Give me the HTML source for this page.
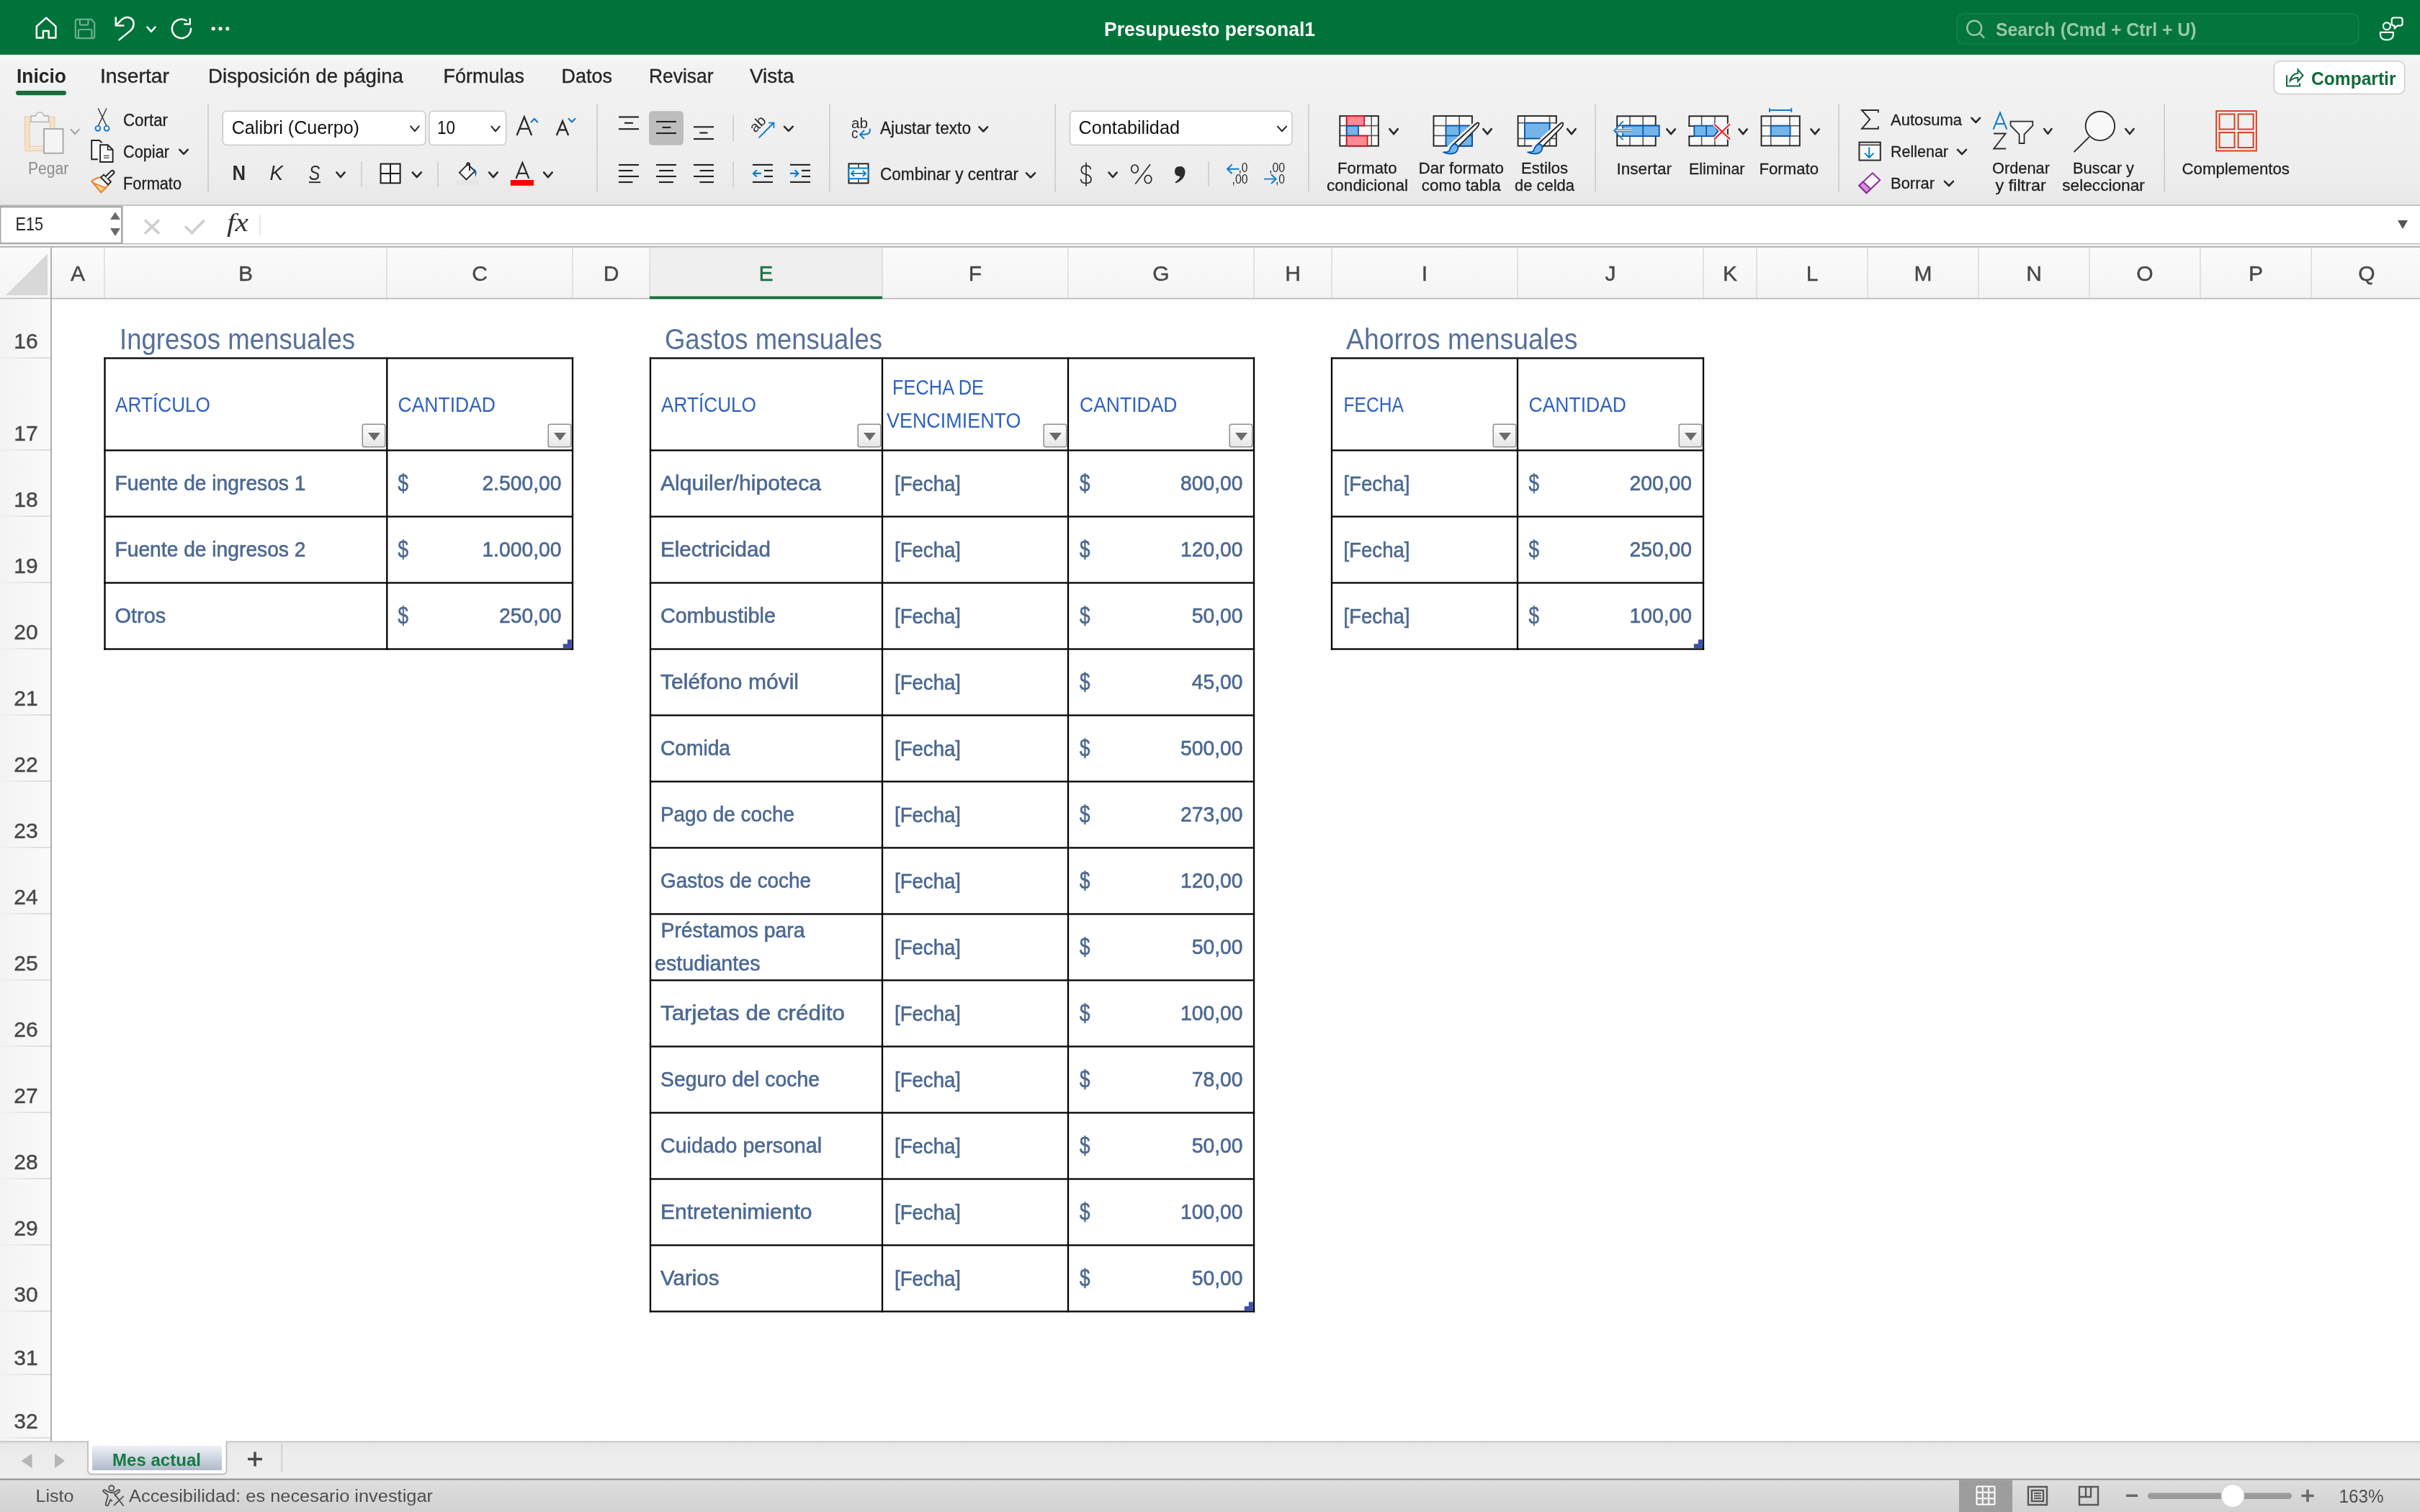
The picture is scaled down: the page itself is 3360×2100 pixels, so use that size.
<!DOCTYPE html><html><head><meta charset="utf-8"><title>Presupuesto personal1</title>
<style>html,body{margin:0;padding:0;width:3360px;height:2100px;overflow:hidden;background:#fff;font-family:"Liberation Sans",sans-serif;} svg{display:block;position:absolute;left:0;top:0;will-change:transform;} text{white-space:pre;}</style></head><body>
<svg width="3360" height="2100" viewBox="0 0 3360 2100">
<defs>
<linearGradient id="ribbonG" x1="0" y1="0" x2="0" y2="1"><stop offset="0" stop-color="#f8f8f8"/><stop offset="0.05" stop-color="#f3f3f3"/><stop offset="0.8" stop-color="#ededed"/><stop offset="1" stop-color="#e8e8e8"/></linearGradient>
<linearGradient id="colhG" x1="0" y1="0" x2="0" y2="1"><stop offset="0" stop-color="#fbfbfb"/><stop offset="1" stop-color="#f4f4f4"/></linearGradient>
<linearGradient id="rowhG" x1="0" y1="0" x2="1" y2="0"><stop offset="0" stop-color="#f3f3f3"/><stop offset="1" stop-color="#fafafa"/></linearGradient>
<linearGradient id="btnG" x1="0" y1="0" x2="0" y2="1"><stop offset="0" stop-color="#fefefe"/><stop offset="1" stop-color="#e6e6e6"/></linearGradient>
<linearGradient id="tabG" x1="0" y1="0" x2="0" y2="1"><stop offset="0" stop-color="#eef1f6"/><stop offset="1" stop-color="#b0bacb"/></linearGradient>
<linearGradient id="rowlineG" x1="0" y1="0" x2="1" y2="0"><stop offset="0" stop-color="#f2f2f2"/><stop offset="0.5" stop-color="#e2e2e2"/><stop offset="1" stop-color="#d8d8d8"/></linearGradient>
<linearGradient id="statG" x1="0" y1="0" x2="0" y2="1"><stop offset="0" stop-color="#dedede"/><stop offset="1" stop-color="#d2d2d2"/></linearGradient>
<linearGradient id="tabbarG" x1="0" y1="0" x2="0" y2="1"><stop offset="0" stop-color="#e6e6e6"/><stop offset="0.25" stop-color="#ececec"/><stop offset="1" stop-color="#ededed"/></linearGradient>
</defs>
<rect x="0" y="0" width="3360" height="76" fill="#00733a" />
<rect x="0" y="76" width="3360" height="209" fill="url(#ribbonG)" />
<rect x="0" y="76" width="3360" height="1.2" fill="#fdfdfd" />
<rect x="0" y="284.2" width="3360" height="1.9" fill="#c2c2c2" />
<rect x="0" y="286.5" width="3360" height="52" fill="#ffffff" />
<rect x="0" y="338" width="3360" height="1.5" fill="#b4b4b4" />
<rect x="0" y="339.5" width="3360" height="2.5" fill="#f4f4f4" />
<rect x="0" y="342" width="3360" height="1.8" fill="#a9a9a9" />
<rect x="0" y="343.8" width="3360" height="71" fill="url(#colhG)" />
<rect x="902" y="343.8" width="323" height="71" fill="#efefef" />
<rect x="0" y="413.8" width="3360" height="1.7" fill="#b9b9b9" />
<rect x="0" y="415.5" width="71" height="1587" fill="url(#rowhG)" />
<rect x="70" y="343.8" width="2" height="1660" fill="#b1b1b1" />
<rect x="0" y="2002" width="3360" height="53" fill="url(#tabbarG)" />
<rect x="0" y="2001.5" width="3360" height="1.8" fill="#c3c3c3" />
<rect x="0" y="2054" width="3360" height="46" fill="url(#statG)" />
<rect x="0" y="2053.6" width="3360" height="2" fill="#8f8f8f" />
<text x="108.0" y="390" font-size="30" fill="#474747" text-anchor="middle" font-weight="normal" font-family='"Liberation Sans", sans-serif' stroke="#474747" stroke-width="0.4" >A</text>
<rect x="144.25" y="344" width="1.5" height="70" fill="#dadada" />
<text x="341.0" y="390" font-size="30" fill="#474747" text-anchor="middle" font-weight="normal" font-family='"Liberation Sans", sans-serif' stroke="#474747" stroke-width="0.4" >B</text>
<rect x="536.25" y="344" width="1.5" height="70" fill="#dadada" />
<text x="666.0" y="390" font-size="30" fill="#474747" text-anchor="middle" font-weight="normal" font-family='"Liberation Sans", sans-serif' stroke="#474747" stroke-width="0.4" >C</text>
<rect x="794.25" y="344" width="1.5" height="70" fill="#dadada" />
<text x="848.5" y="390" font-size="30" fill="#474747" text-anchor="middle" font-weight="normal" font-family='"Liberation Sans", sans-serif' stroke="#474747" stroke-width="0.4" >D</text>
<rect x="901.25" y="344" width="1.5" height="70" fill="#dadada" />
<text x="1063.5" y="390" font-size="30" fill="#1b7240" text-anchor="middle" font-weight="normal" font-family='"Liberation Sans", sans-serif' stroke="#1b7240" stroke-width="0.4" >E</text>
<rect x="1224.25" y="344" width="1.5" height="70" fill="#dadada" />
<text x="1354.0" y="390" font-size="30" fill="#474747" text-anchor="middle" font-weight="normal" font-family='"Liberation Sans", sans-serif' stroke="#474747" stroke-width="0.4" >F</text>
<rect x="1482.25" y="344" width="1.5" height="70" fill="#dadada" />
<text x="1612.0" y="390" font-size="30" fill="#474747" text-anchor="middle" font-weight="normal" font-family='"Liberation Sans", sans-serif' stroke="#474747" stroke-width="0.4" >G</text>
<rect x="1740.25" y="344" width="1.5" height="70" fill="#dadada" />
<text x="1795.0" y="390" font-size="30" fill="#474747" text-anchor="middle" font-weight="normal" font-family='"Liberation Sans", sans-serif' stroke="#474747" stroke-width="0.4" >H</text>
<rect x="1848.25" y="344" width="1.5" height="70" fill="#dadada" />
<text x="1978.0" y="390" font-size="30" fill="#474747" text-anchor="middle" font-weight="normal" font-family='"Liberation Sans", sans-serif' stroke="#474747" stroke-width="0.4" >I</text>
<rect x="2106.25" y="344" width="1.5" height="70" fill="#dadada" />
<text x="2236.0" y="390" font-size="30" fill="#474747" text-anchor="middle" font-weight="normal" font-family='"Liberation Sans", sans-serif' stroke="#474747" stroke-width="0.4" >J</text>
<rect x="2364.25" y="344" width="1.5" height="70" fill="#dadada" />
<text x="2402.0" y="390" font-size="30" fill="#474747" text-anchor="middle" font-weight="normal" font-family='"Liberation Sans", sans-serif' stroke="#474747" stroke-width="0.4" >K</text>
<rect x="2438.25" y="344" width="1.5" height="70" fill="#dadada" />
<text x="2516.0" y="390" font-size="30" fill="#474747" text-anchor="middle" font-weight="normal" font-family='"Liberation Sans", sans-serif' stroke="#474747" stroke-width="0.4" >L</text>
<rect x="2592.25" y="344" width="1.5" height="70" fill="#dadada" />
<text x="2670.0" y="390" font-size="30" fill="#474747" text-anchor="middle" font-weight="normal" font-family='"Liberation Sans", sans-serif' stroke="#474747" stroke-width="0.4" >M</text>
<rect x="2746.25" y="344" width="1.5" height="70" fill="#dadada" />
<text x="2824.0" y="390" font-size="30" fill="#474747" text-anchor="middle" font-weight="normal" font-family='"Liberation Sans", sans-serif' stroke="#474747" stroke-width="0.4" >N</text>
<rect x="2900.25" y="344" width="1.5" height="70" fill="#dadada" />
<text x="2978.0" y="390" font-size="30" fill="#474747" text-anchor="middle" font-weight="normal" font-family='"Liberation Sans", sans-serif' stroke="#474747" stroke-width="0.4" >O</text>
<rect x="3054.25" y="344" width="1.5" height="70" fill="#dadada" />
<text x="3132.0" y="390" font-size="30" fill="#474747" text-anchor="middle" font-weight="normal" font-family='"Liberation Sans", sans-serif' stroke="#474747" stroke-width="0.4" >P</text>
<rect x="3208.25" y="344" width="1.5" height="70" fill="#dadada" />
<text x="3286.0" y="390" font-size="30" fill="#474747" text-anchor="middle" font-weight="normal" font-family='"Liberation Sans", sans-serif' stroke="#474747" stroke-width="0.4" >Q</text>
<rect x="902" y="411.5" width="323" height="3.8" fill="#1b6e3d" />
<polygon points="66,352.5 66,410 8,410" fill="#d8d8d8"/>
<rect x="0" y="496.1" width="70" height="1.8" fill="url(#rowlineG)" />
<text x="36" y="484" font-size="30" fill="#474747" text-anchor="middle" font-weight="normal" font-family='"Liberation Sans", sans-serif' stroke="#474747" stroke-width="0.4" >16</text>
<rect x="0" y="624.1" width="70" height="1.8" fill="url(#rowlineG)" />
<text x="36" y="612" font-size="30" fill="#474747" text-anchor="middle" font-weight="normal" font-family='"Liberation Sans", sans-serif' stroke="#474747" stroke-width="0.4" >17</text>
<rect x="0" y="716.1" width="70" height="1.8" fill="url(#rowlineG)" />
<text x="36" y="704" font-size="30" fill="#474747" text-anchor="middle" font-weight="normal" font-family='"Liberation Sans", sans-serif' stroke="#474747" stroke-width="0.4" >18</text>
<rect x="0" y="808.1" width="70" height="1.8" fill="url(#rowlineG)" />
<text x="36" y="796" font-size="30" fill="#474747" text-anchor="middle" font-weight="normal" font-family='"Liberation Sans", sans-serif' stroke="#474747" stroke-width="0.4" >19</text>
<rect x="0" y="900.1" width="70" height="1.8" fill="url(#rowlineG)" />
<text x="36" y="888" font-size="30" fill="#474747" text-anchor="middle" font-weight="normal" font-family='"Liberation Sans", sans-serif' stroke="#474747" stroke-width="0.4" >20</text>
<rect x="0" y="992.1" width="70" height="1.8" fill="url(#rowlineG)" />
<text x="36" y="980" font-size="30" fill="#474747" text-anchor="middle" font-weight="normal" font-family='"Liberation Sans", sans-serif' stroke="#474747" stroke-width="0.4" >21</text>
<rect x="0" y="1084.1" width="70" height="1.8" fill="url(#rowlineG)" />
<text x="36" y="1072" font-size="30" fill="#474747" text-anchor="middle" font-weight="normal" font-family='"Liberation Sans", sans-serif' stroke="#474747" stroke-width="0.4" >22</text>
<rect x="0" y="1176.1" width="70" height="1.8" fill="url(#rowlineG)" />
<text x="36" y="1164" font-size="30" fill="#474747" text-anchor="middle" font-weight="normal" font-family='"Liberation Sans", sans-serif' stroke="#474747" stroke-width="0.4" >23</text>
<rect x="0" y="1268.1" width="70" height="1.8" fill="url(#rowlineG)" />
<text x="36" y="1256" font-size="30" fill="#474747" text-anchor="middle" font-weight="normal" font-family='"Liberation Sans", sans-serif' stroke="#474747" stroke-width="0.4" >24</text>
<rect x="0" y="1360.1" width="70" height="1.8" fill="url(#rowlineG)" />
<text x="36" y="1348" font-size="30" fill="#474747" text-anchor="middle" font-weight="normal" font-family='"Liberation Sans", sans-serif' stroke="#474747" stroke-width="0.4" >25</text>
<rect x="0" y="1452.1" width="70" height="1.8" fill="url(#rowlineG)" />
<text x="36" y="1440" font-size="30" fill="#474747" text-anchor="middle" font-weight="normal" font-family='"Liberation Sans", sans-serif' stroke="#474747" stroke-width="0.4" >26</text>
<rect x="0" y="1544.1" width="70" height="1.8" fill="url(#rowlineG)" />
<text x="36" y="1532" font-size="30" fill="#474747" text-anchor="middle" font-weight="normal" font-family='"Liberation Sans", sans-serif' stroke="#474747" stroke-width="0.4" >27</text>
<rect x="0" y="1636.1" width="70" height="1.8" fill="url(#rowlineG)" />
<text x="36" y="1624" font-size="30" fill="#474747" text-anchor="middle" font-weight="normal" font-family='"Liberation Sans", sans-serif' stroke="#474747" stroke-width="0.4" >28</text>
<rect x="0" y="1728.1" width="70" height="1.8" fill="url(#rowlineG)" />
<text x="36" y="1716" font-size="30" fill="#474747" text-anchor="middle" font-weight="normal" font-family='"Liberation Sans", sans-serif' stroke="#474747" stroke-width="0.4" >29</text>
<rect x="0" y="1820.1" width="70" height="1.8" fill="url(#rowlineG)" />
<text x="36" y="1808" font-size="30" fill="#474747" text-anchor="middle" font-weight="normal" font-family='"Liberation Sans", sans-serif' stroke="#474747" stroke-width="0.4" >30</text>
<rect x="0" y="1908.1" width="70" height="1.8" fill="url(#rowlineG)" />
<text x="36" y="1896" font-size="30" fill="#474747" text-anchor="middle" font-weight="normal" font-family='"Liberation Sans", sans-serif' stroke="#474747" stroke-width="0.4" >31</text>
<rect x="0" y="1996.1" width="70" height="1.8" fill="url(#rowlineG)" />
<text x="36" y="1984" font-size="30" fill="#474747" text-anchor="middle" font-weight="normal" font-family='"Liberation Sans", sans-serif' stroke="#474747" stroke-width="0.4" >32</text>
<text x="166" y="484.5" font-size="41" fill="#56709a" text-anchor="start" font-weight="normal" font-family='"Liberation Sans", sans-serif' textLength="327" lengthAdjust="spacingAndGlyphs" >Ingresos mensuales</text>
<rect x="144.35" y="496.35" width="651.8" height="2.3" fill="#000" />
<rect x="144.35" y="624.35" width="651.8" height="2.3" fill="#000" />
<rect x="144.35" y="716.35" width="651.8" height="2.3" fill="#000" />
<rect x="144.35" y="808.35" width="651.8" height="2.3" fill="#000" />
<rect x="144.35" y="900.35" width="651.8" height="2.3" fill="#000" />
<rect x="144.35" y="496.35" width="2.3" height="406.3" fill="#000" />
<rect x="536.15" y="496.35" width="2.3" height="406.3" fill="#000" />
<rect x="793.85" y="496.35" width="2.3" height="406.3" fill="#000" />
<text x="160" y="572" font-size="29" fill="#2f62bf" text-anchor="start" font-weight="normal" font-family='"Liberation Sans", sans-serif' textLength="132" lengthAdjust="spacingAndGlyphs" >ARTÍCULO</text>
<text x="552.5" y="572" font-size="29" fill="#2f62bf" text-anchor="start" font-weight="normal" font-family='"Liberation Sans", sans-serif' textLength="135.5" lengthAdjust="spacingAndGlyphs" >CANTIDAD</text>
<rect x="503.25" y="589.25" width="31.5" height="31.5" rx="2.5" fill="url(#btnG)" stroke="#8e8e8e" stroke-width="1.5"/>
<polygon points="511.0,601.0 528.0,601.0 519.5,612.0" fill="#6b6b6b"/>
<rect x="761.25" y="589.25" width="31.5" height="31.5" rx="2.5" fill="url(#btnG)" stroke="#8e8e8e" stroke-width="1.5"/>
<polygon points="769.0,601.0 786.0,601.0 777.5,612.0" fill="#6b6b6b"/>
<text x="159.5" y="681" font-size="30" fill="#4b6891" text-anchor="start" font-weight="normal" font-family='"Liberation Sans", sans-serif' textLength="265" lengthAdjust="spacingAndGlyphs" stroke="#4b6891" stroke-width="0.6" >Fuente de ingresos 1</text>
<text x="552.5" y="681.5" font-size="33" fill="#4b6891" text-anchor="start" font-weight="normal" font-family='"Liberation Sans", sans-serif' textLength="14.5" lengthAdjust="spacingAndGlyphs" stroke="#4b6891" stroke-width="0.6" >$</text>
<text x="779.5" y="681" font-size="30" fill="#4b6891" text-anchor="end" font-weight="normal" font-family='"Liberation Sans", sans-serif' textLength="110.1" lengthAdjust="spacingAndGlyphs" stroke="#4b6891" stroke-width="0.6" >2.500,00</text>
<text x="159.5" y="773" font-size="30" fill="#4b6891" text-anchor="start" font-weight="normal" font-family='"Liberation Sans", sans-serif' textLength="265" lengthAdjust="spacingAndGlyphs" stroke="#4b6891" stroke-width="0.6" >Fuente de ingresos 2</text>
<text x="552.5" y="773.5" font-size="33" fill="#4b6891" text-anchor="start" font-weight="normal" font-family='"Liberation Sans", sans-serif' textLength="14.5" lengthAdjust="spacingAndGlyphs" stroke="#4b6891" stroke-width="0.6" >$</text>
<text x="779.5" y="773" font-size="30" fill="#4b6891" text-anchor="end" font-weight="normal" font-family='"Liberation Sans", sans-serif' textLength="110.1" lengthAdjust="spacingAndGlyphs" stroke="#4b6891" stroke-width="0.6" >1.000,00</text>
<text x="159.5" y="865" font-size="30" fill="#4b6891" text-anchor="start" font-weight="normal" font-family='"Liberation Sans", sans-serif' textLength="70.8" lengthAdjust="spacingAndGlyphs" stroke="#4b6891" stroke-width="0.6" >Otros</text>
<text x="552.5" y="865.5" font-size="33" fill="#4b6891" text-anchor="start" font-weight="normal" font-family='"Liberation Sans", sans-serif' textLength="14.5" lengthAdjust="spacingAndGlyphs" stroke="#4b6891" stroke-width="0.6" >$</text>
<text x="779.5" y="865" font-size="30" fill="#4b6891" text-anchor="end" font-weight="normal" font-family='"Liberation Sans", sans-serif' textLength="86.5" lengthAdjust="spacingAndGlyphs" stroke="#4b6891" stroke-width="0.6" >250,00</text>
<polygon points="781.8,900.2 781.8,894.2 787.8,894.2 787.8,888.2 793.8,888.2 793.8,900.2" fill="#3d4fa9"/>
<text x="923" y="484.5" font-size="41" fill="#56709a" text-anchor="start" font-weight="normal" font-family='"Liberation Sans", sans-serif' textLength="302" lengthAdjust="spacingAndGlyphs" >Gastos mensuales</text>
<rect x="901.85" y="496.35" width="840.3" height="2.3" fill="#000" />
<rect x="901.85" y="624.35" width="840.3" height="2.3" fill="#000" />
<rect x="901.85" y="716.35" width="840.3" height="2.3" fill="#000" />
<rect x="901.85" y="808.35" width="840.3" height="2.3" fill="#000" />
<rect x="901.85" y="900.35" width="840.3" height="2.3" fill="#000" />
<rect x="901.85" y="992.35" width="840.3" height="2.3" fill="#000" />
<rect x="901.85" y="1084.35" width="840.3" height="2.3" fill="#000" />
<rect x="901.85" y="1176.35" width="840.3" height="2.3" fill="#000" />
<rect x="901.85" y="1268.35" width="840.3" height="2.3" fill="#000" />
<rect x="901.85" y="1360.35" width="840.3" height="2.3" fill="#000" />
<rect x="901.85" y="1452.35" width="840.3" height="2.3" fill="#000" />
<rect x="901.85" y="1544.35" width="840.3" height="2.3" fill="#000" />
<rect x="901.85" y="1636.35" width="840.3" height="2.3" fill="#000" />
<rect x="901.85" y="1728.35" width="840.3" height="2.3" fill="#000" />
<rect x="901.85" y="1820.35" width="840.3" height="2.3" fill="#000" />
<rect x="901.85" y="496.35" width="2.3" height="1326.3" fill="#000" />
<rect x="1223.85" y="496.35" width="2.3" height="1326.3" fill="#000" />
<rect x="1481.85" y="496.35" width="2.3" height="1326.3" fill="#000" />
<rect x="1739.85" y="496.35" width="2.3" height="1326.3" fill="#000" />
<text x="918" y="572" font-size="29" fill="#2f62bf" text-anchor="start" font-weight="normal" font-family='"Liberation Sans", sans-serif' textLength="132" lengthAdjust="spacingAndGlyphs" >ARTÍCULO</text>
<text x="1239" y="547.5" font-size="29" fill="#2f62bf" text-anchor="start" font-weight="normal" font-family='"Liberation Sans", sans-serif' textLength="127" lengthAdjust="spacingAndGlyphs" >FECHA DE</text>
<text x="1231" y="594" font-size="29" fill="#2f62bf" text-anchor="start" font-weight="normal" font-family='"Liberation Sans", sans-serif' textLength="186.5" lengthAdjust="spacingAndGlyphs" >VENCIMIENTO</text>
<text x="1499" y="572" font-size="29" fill="#2f62bf" text-anchor="start" font-weight="normal" font-family='"Liberation Sans", sans-serif' textLength="135.5" lengthAdjust="spacingAndGlyphs" >CANTIDAD</text>
<rect x="1191.25" y="589.25" width="31.5" height="31.5" rx="2.5" fill="url(#btnG)" stroke="#8e8e8e" stroke-width="1.5"/>
<polygon points="1199.0,601.0 1216.0,601.0 1207.5,612.0" fill="#6b6b6b"/>
<rect x="1449.25" y="589.25" width="31.5" height="31.5" rx="2.5" fill="url(#btnG)" stroke="#8e8e8e" stroke-width="1.5"/>
<polygon points="1457.0,601.0 1474.0,601.0 1465.5,612.0" fill="#6b6b6b"/>
<rect x="1707.25" y="589.25" width="31.5" height="31.5" rx="2.5" fill="url(#btnG)" stroke="#8e8e8e" stroke-width="1.5"/>
<polygon points="1715.0,601.0 1732.0,601.0 1723.5,612.0" fill="#6b6b6b"/>
<text x="917" y="681" font-size="30" fill="#4b6891" text-anchor="start" font-weight="normal" font-family='"Liberation Sans", sans-serif' textLength="223" lengthAdjust="spacingAndGlyphs" stroke="#4b6891" stroke-width="0.6" >Alquiler/hipoteca</text>
<text x="1242" y="682" font-size="30" fill="#4b6891" text-anchor="start" font-weight="normal" font-family='"Liberation Sans", sans-serif' textLength="92" lengthAdjust="spacingAndGlyphs" stroke="#4b6891" stroke-width="0.6" >[Fecha]</text>
<text x="1499" y="681.5" font-size="33" fill="#4b6891" text-anchor="start" font-weight="normal" font-family='"Liberation Sans", sans-serif' textLength="14.5" lengthAdjust="spacingAndGlyphs" stroke="#4b6891" stroke-width="0.6" >$</text>
<text x="1725.5" y="681" font-size="30" fill="#4b6891" text-anchor="end" font-weight="normal" font-family='"Liberation Sans", sans-serif' textLength="86.5" lengthAdjust="spacingAndGlyphs" stroke="#4b6891" stroke-width="0.6" >800,00</text>
<text x="917" y="773" font-size="30" fill="#4b6891" text-anchor="start" font-weight="normal" font-family='"Liberation Sans", sans-serif' textLength="153" lengthAdjust="spacingAndGlyphs" stroke="#4b6891" stroke-width="0.6" >Electricidad</text>
<text x="1242" y="774" font-size="30" fill="#4b6891" text-anchor="start" font-weight="normal" font-family='"Liberation Sans", sans-serif' textLength="92" lengthAdjust="spacingAndGlyphs" stroke="#4b6891" stroke-width="0.6" >[Fecha]</text>
<text x="1499" y="773.5" font-size="33" fill="#4b6891" text-anchor="start" font-weight="normal" font-family='"Liberation Sans", sans-serif' textLength="14.5" lengthAdjust="spacingAndGlyphs" stroke="#4b6891" stroke-width="0.6" >$</text>
<text x="1725.5" y="773" font-size="30" fill="#4b6891" text-anchor="end" font-weight="normal" font-family='"Liberation Sans", sans-serif' textLength="86.5" lengthAdjust="spacingAndGlyphs" stroke="#4b6891" stroke-width="0.6" >120,00</text>
<text x="917" y="865" font-size="30" fill="#4b6891" text-anchor="start" font-weight="normal" font-family='"Liberation Sans", sans-serif' textLength="160" lengthAdjust="spacingAndGlyphs" stroke="#4b6891" stroke-width="0.6" >Combustible</text>
<text x="1242" y="866" font-size="30" fill="#4b6891" text-anchor="start" font-weight="normal" font-family='"Liberation Sans", sans-serif' textLength="92" lengthAdjust="spacingAndGlyphs" stroke="#4b6891" stroke-width="0.6" >[Fecha]</text>
<text x="1499" y="865.5" font-size="33" fill="#4b6891" text-anchor="start" font-weight="normal" font-family='"Liberation Sans", sans-serif' textLength="14.5" lengthAdjust="spacingAndGlyphs" stroke="#4b6891" stroke-width="0.6" >$</text>
<text x="1725.5" y="865" font-size="30" fill="#4b6891" text-anchor="end" font-weight="normal" font-family='"Liberation Sans", sans-serif' textLength="70.8" lengthAdjust="spacingAndGlyphs" stroke="#4b6891" stroke-width="0.6" >50,00</text>
<text x="917" y="957" font-size="30" fill="#4b6891" text-anchor="start" font-weight="normal" font-family='"Liberation Sans", sans-serif' textLength="192" lengthAdjust="spacingAndGlyphs" stroke="#4b6891" stroke-width="0.6" >Teléfono móvil</text>
<text x="1242" y="958" font-size="30" fill="#4b6891" text-anchor="start" font-weight="normal" font-family='"Liberation Sans", sans-serif' textLength="92" lengthAdjust="spacingAndGlyphs" stroke="#4b6891" stroke-width="0.6" >[Fecha]</text>
<text x="1499" y="957.5" font-size="33" fill="#4b6891" text-anchor="start" font-weight="normal" font-family='"Liberation Sans", sans-serif' textLength="14.5" lengthAdjust="spacingAndGlyphs" stroke="#4b6891" stroke-width="0.6" >$</text>
<text x="1725.5" y="957" font-size="30" fill="#4b6891" text-anchor="end" font-weight="normal" font-family='"Liberation Sans", sans-serif' textLength="70.8" lengthAdjust="spacingAndGlyphs" stroke="#4b6891" stroke-width="0.6" >45,00</text>
<text x="917" y="1049" font-size="30" fill="#4b6891" text-anchor="start" font-weight="normal" font-family='"Liberation Sans", sans-serif' textLength="97" lengthAdjust="spacingAndGlyphs" stroke="#4b6891" stroke-width="0.6" >Comida</text>
<text x="1242" y="1050" font-size="30" fill="#4b6891" text-anchor="start" font-weight="normal" font-family='"Liberation Sans", sans-serif' textLength="92" lengthAdjust="spacingAndGlyphs" stroke="#4b6891" stroke-width="0.6" >[Fecha]</text>
<text x="1499" y="1049.5" font-size="33" fill="#4b6891" text-anchor="start" font-weight="normal" font-family='"Liberation Sans", sans-serif' textLength="14.5" lengthAdjust="spacingAndGlyphs" stroke="#4b6891" stroke-width="0.6" >$</text>
<text x="1725.5" y="1049" font-size="30" fill="#4b6891" text-anchor="end" font-weight="normal" font-family='"Liberation Sans", sans-serif' textLength="86.5" lengthAdjust="spacingAndGlyphs" stroke="#4b6891" stroke-width="0.6" >500,00</text>
<text x="917" y="1141" font-size="30" fill="#4b6891" text-anchor="start" font-weight="normal" font-family='"Liberation Sans", sans-serif' textLength="186" lengthAdjust="spacingAndGlyphs" stroke="#4b6891" stroke-width="0.6" >Pago de coche</text>
<text x="1242" y="1142" font-size="30" fill="#4b6891" text-anchor="start" font-weight="normal" font-family='"Liberation Sans", sans-serif' textLength="92" lengthAdjust="spacingAndGlyphs" stroke="#4b6891" stroke-width="0.6" >[Fecha]</text>
<text x="1499" y="1141.5" font-size="33" fill="#4b6891" text-anchor="start" font-weight="normal" font-family='"Liberation Sans", sans-serif' textLength="14.5" lengthAdjust="spacingAndGlyphs" stroke="#4b6891" stroke-width="0.6" >$</text>
<text x="1725.5" y="1141" font-size="30" fill="#4b6891" text-anchor="end" font-weight="normal" font-family='"Liberation Sans", sans-serif' textLength="86.5" lengthAdjust="spacingAndGlyphs" stroke="#4b6891" stroke-width="0.6" >273,00</text>
<text x="917" y="1233" font-size="30" fill="#4b6891" text-anchor="start" font-weight="normal" font-family='"Liberation Sans", sans-serif' textLength="209" lengthAdjust="spacingAndGlyphs" stroke="#4b6891" stroke-width="0.6" >Gastos de coche</text>
<text x="1242" y="1234" font-size="30" fill="#4b6891" text-anchor="start" font-weight="normal" font-family='"Liberation Sans", sans-serif' textLength="92" lengthAdjust="spacingAndGlyphs" stroke="#4b6891" stroke-width="0.6" >[Fecha]</text>
<text x="1499" y="1233.5" font-size="33" fill="#4b6891" text-anchor="start" font-weight="normal" font-family='"Liberation Sans", sans-serif' textLength="14.5" lengthAdjust="spacingAndGlyphs" stroke="#4b6891" stroke-width="0.6" >$</text>
<text x="1725.5" y="1233" font-size="30" fill="#4b6891" text-anchor="end" font-weight="normal" font-family='"Liberation Sans", sans-serif' textLength="86.5" lengthAdjust="spacingAndGlyphs" stroke="#4b6891" stroke-width="0.6" >120,00</text>
<text x="917.5" y="1302" font-size="30" fill="#4b6891" text-anchor="start" font-weight="normal" font-family='"Liberation Sans", sans-serif' textLength="200" lengthAdjust="spacingAndGlyphs" stroke="#4b6891" stroke-width="0.6" >Préstamos para</text>
<text x="909" y="1347.5" font-size="30" fill="#4b6891" text-anchor="start" font-weight="normal" font-family='"Liberation Sans", sans-serif' textLength="146.5" lengthAdjust="spacingAndGlyphs" stroke="#4b6891" stroke-width="0.6" >estudiantes</text>
<text x="1242" y="1326" font-size="30" fill="#4b6891" text-anchor="start" font-weight="normal" font-family='"Liberation Sans", sans-serif' textLength="92" lengthAdjust="spacingAndGlyphs" stroke="#4b6891" stroke-width="0.6" >[Fecha]</text>
<text x="1499" y="1325.5" font-size="33" fill="#4b6891" text-anchor="start" font-weight="normal" font-family='"Liberation Sans", sans-serif' textLength="14.5" lengthAdjust="spacingAndGlyphs" stroke="#4b6891" stroke-width="0.6" >$</text>
<text x="1725.5" y="1325" font-size="30" fill="#4b6891" text-anchor="end" font-weight="normal" font-family='"Liberation Sans", sans-serif' textLength="70.8" lengthAdjust="spacingAndGlyphs" stroke="#4b6891" stroke-width="0.6" >50,00</text>
<text x="917" y="1417" font-size="30" fill="#4b6891" text-anchor="start" font-weight="normal" font-family='"Liberation Sans", sans-serif' textLength="256" lengthAdjust="spacingAndGlyphs" stroke="#4b6891" stroke-width="0.6" >Tarjetas de crédito</text>
<text x="1242" y="1418" font-size="30" fill="#4b6891" text-anchor="start" font-weight="normal" font-family='"Liberation Sans", sans-serif' textLength="92" lengthAdjust="spacingAndGlyphs" stroke="#4b6891" stroke-width="0.6" >[Fecha]</text>
<text x="1499" y="1417.5" font-size="33" fill="#4b6891" text-anchor="start" font-weight="normal" font-family='"Liberation Sans", sans-serif' textLength="14.5" lengthAdjust="spacingAndGlyphs" stroke="#4b6891" stroke-width="0.6" >$</text>
<text x="1725.5" y="1417" font-size="30" fill="#4b6891" text-anchor="end" font-weight="normal" font-family='"Liberation Sans", sans-serif' textLength="86.5" lengthAdjust="spacingAndGlyphs" stroke="#4b6891" stroke-width="0.6" >100,00</text>
<text x="917" y="1509" font-size="30" fill="#4b6891" text-anchor="start" font-weight="normal" font-family='"Liberation Sans", sans-serif' textLength="221" lengthAdjust="spacingAndGlyphs" stroke="#4b6891" stroke-width="0.6" >Seguro del coche</text>
<text x="1242" y="1510" font-size="30" fill="#4b6891" text-anchor="start" font-weight="normal" font-family='"Liberation Sans", sans-serif' textLength="92" lengthAdjust="spacingAndGlyphs" stroke="#4b6891" stroke-width="0.6" >[Fecha]</text>
<text x="1499" y="1509.5" font-size="33" fill="#4b6891" text-anchor="start" font-weight="normal" font-family='"Liberation Sans", sans-serif' textLength="14.5" lengthAdjust="spacingAndGlyphs" stroke="#4b6891" stroke-width="0.6" >$</text>
<text x="1725.5" y="1509" font-size="30" fill="#4b6891" text-anchor="end" font-weight="normal" font-family='"Liberation Sans", sans-serif' textLength="70.8" lengthAdjust="spacingAndGlyphs" stroke="#4b6891" stroke-width="0.6" >78,00</text>
<text x="917" y="1601" font-size="30" fill="#4b6891" text-anchor="start" font-weight="normal" font-family='"Liberation Sans", sans-serif' textLength="224" lengthAdjust="spacingAndGlyphs" stroke="#4b6891" stroke-width="0.6" >Cuidado personal</text>
<text x="1242" y="1602" font-size="30" fill="#4b6891" text-anchor="start" font-weight="normal" font-family='"Liberation Sans", sans-serif' textLength="92" lengthAdjust="spacingAndGlyphs" stroke="#4b6891" stroke-width="0.6" >[Fecha]</text>
<text x="1499" y="1601.5" font-size="33" fill="#4b6891" text-anchor="start" font-weight="normal" font-family='"Liberation Sans", sans-serif' textLength="14.5" lengthAdjust="spacingAndGlyphs" stroke="#4b6891" stroke-width="0.6" >$</text>
<text x="1725.5" y="1601" font-size="30" fill="#4b6891" text-anchor="end" font-weight="normal" font-family='"Liberation Sans", sans-serif' textLength="70.8" lengthAdjust="spacingAndGlyphs" stroke="#4b6891" stroke-width="0.6" >50,00</text>
<text x="917" y="1693" font-size="30" fill="#4b6891" text-anchor="start" font-weight="normal" font-family='"Liberation Sans", sans-serif' textLength="210.5" lengthAdjust="spacingAndGlyphs" stroke="#4b6891" stroke-width="0.6" >Entretenimiento</text>
<text x="1242" y="1694" font-size="30" fill="#4b6891" text-anchor="start" font-weight="normal" font-family='"Liberation Sans", sans-serif' textLength="92" lengthAdjust="spacingAndGlyphs" stroke="#4b6891" stroke-width="0.6" >[Fecha]</text>
<text x="1499" y="1693.5" font-size="33" fill="#4b6891" text-anchor="start" font-weight="normal" font-family='"Liberation Sans", sans-serif' textLength="14.5" lengthAdjust="spacingAndGlyphs" stroke="#4b6891" stroke-width="0.6" >$</text>
<text x="1725.5" y="1693" font-size="30" fill="#4b6891" text-anchor="end" font-weight="normal" font-family='"Liberation Sans", sans-serif' textLength="86.5" lengthAdjust="spacingAndGlyphs" stroke="#4b6891" stroke-width="0.6" >100,00</text>
<text x="917" y="1785" font-size="30" fill="#4b6891" text-anchor="start" font-weight="normal" font-family='"Liberation Sans", sans-serif' textLength="81.5" lengthAdjust="spacingAndGlyphs" stroke="#4b6891" stroke-width="0.6" >Varios</text>
<text x="1242" y="1786" font-size="30" fill="#4b6891" text-anchor="start" font-weight="normal" font-family='"Liberation Sans", sans-serif' textLength="92" lengthAdjust="spacingAndGlyphs" stroke="#4b6891" stroke-width="0.6" >[Fecha]</text>
<text x="1499" y="1785.5" font-size="33" fill="#4b6891" text-anchor="start" font-weight="normal" font-family='"Liberation Sans", sans-serif' textLength="14.5" lengthAdjust="spacingAndGlyphs" stroke="#4b6891" stroke-width="0.6" >$</text>
<text x="1725.5" y="1785" font-size="30" fill="#4b6891" text-anchor="end" font-weight="normal" font-family='"Liberation Sans", sans-serif' textLength="70.8" lengthAdjust="spacingAndGlyphs" stroke="#4b6891" stroke-width="0.6" >50,00</text>
<polygon points="1727.8,1820.2 1727.8,1814.2 1733.8,1814.2 1733.8,1808.2 1739.8,1808.2 1739.8,1820.2" fill="#3d4fa9"/>
<text x="1869" y="484.5" font-size="41" fill="#56709a" text-anchor="start" font-weight="normal" font-family='"Liberation Sans", sans-serif' textLength="321.5" lengthAdjust="spacingAndGlyphs" >Ahorros mensuales</text>
<rect x="1847.85" y="496.35" width="518.3" height="2.3" fill="#000" />
<rect x="1847.85" y="624.35" width="518.3" height="2.3" fill="#000" />
<rect x="1847.85" y="716.35" width="518.3" height="2.3" fill="#000" />
<rect x="1847.85" y="808.35" width="518.3" height="2.3" fill="#000" />
<rect x="1847.85" y="900.35" width="518.3" height="2.3" fill="#000" />
<rect x="1847.85" y="496.35" width="2.3" height="406.3" fill="#000" />
<rect x="2105.85" y="496.35" width="2.3" height="406.3" fill="#000" />
<rect x="2363.85" y="496.35" width="2.3" height="406.3" fill="#000" />
<text x="1865.5" y="572" font-size="29" fill="#2f62bf" text-anchor="start" font-weight="normal" font-family='"Liberation Sans", sans-serif' textLength="83.5" lengthAdjust="spacingAndGlyphs" >FECHA</text>
<text x="2122.5" y="572" font-size="29" fill="#2f62bf" text-anchor="start" font-weight="normal" font-family='"Liberation Sans", sans-serif' textLength="135.5" lengthAdjust="spacingAndGlyphs" >CANTIDAD</text>
<rect x="2073.25" y="589.25" width="31.5" height="31.5" rx="2.5" fill="url(#btnG)" stroke="#8e8e8e" stroke-width="1.5"/>
<polygon points="2081.0,601.0 2098.0,601.0 2089.5,612.0" fill="#6b6b6b"/>
<rect x="2331.25" y="589.25" width="31.5" height="31.5" rx="2.5" fill="url(#btnG)" stroke="#8e8e8e" stroke-width="1.5"/>
<polygon points="2339.0,601.0 2356.0,601.0 2347.5,612.0" fill="#6b6b6b"/>
<text x="1865.5" y="682" font-size="30" fill="#4b6891" text-anchor="start" font-weight="normal" font-family='"Liberation Sans", sans-serif' textLength="92" lengthAdjust="spacingAndGlyphs" stroke="#4b6891" stroke-width="0.6" >[Fecha]</text>
<text x="2122.5" y="681.5" font-size="33" fill="#4b6891" text-anchor="start" font-weight="normal" font-family='"Liberation Sans", sans-serif' textLength="14.5" lengthAdjust="spacingAndGlyphs" stroke="#4b6891" stroke-width="0.6" >$</text>
<text x="2349" y="681" font-size="30" fill="#4b6891" text-anchor="end" font-weight="normal" font-family='"Liberation Sans", sans-serif' textLength="86.5" lengthAdjust="spacingAndGlyphs" stroke="#4b6891" stroke-width="0.6" >200,00</text>
<text x="1865.5" y="774" font-size="30" fill="#4b6891" text-anchor="start" font-weight="normal" font-family='"Liberation Sans", sans-serif' textLength="92" lengthAdjust="spacingAndGlyphs" stroke="#4b6891" stroke-width="0.6" >[Fecha]</text>
<text x="2122.5" y="773.5" font-size="33" fill="#4b6891" text-anchor="start" font-weight="normal" font-family='"Liberation Sans", sans-serif' textLength="14.5" lengthAdjust="spacingAndGlyphs" stroke="#4b6891" stroke-width="0.6" >$</text>
<text x="2349" y="773" font-size="30" fill="#4b6891" text-anchor="end" font-weight="normal" font-family='"Liberation Sans", sans-serif' textLength="86.5" lengthAdjust="spacingAndGlyphs" stroke="#4b6891" stroke-width="0.6" >250,00</text>
<text x="1865.5" y="866" font-size="30" fill="#4b6891" text-anchor="start" font-weight="normal" font-family='"Liberation Sans", sans-serif' textLength="92" lengthAdjust="spacingAndGlyphs" stroke="#4b6891" stroke-width="0.6" >[Fecha]</text>
<text x="2122.5" y="865.5" font-size="33" fill="#4b6891" text-anchor="start" font-weight="normal" font-family='"Liberation Sans", sans-serif' textLength="14.5" lengthAdjust="spacingAndGlyphs" stroke="#4b6891" stroke-width="0.6" >$</text>
<text x="2349" y="865" font-size="30" fill="#4b6891" text-anchor="end" font-weight="normal" font-family='"Liberation Sans", sans-serif' textLength="86.5" lengthAdjust="spacingAndGlyphs" stroke="#4b6891" stroke-width="0.6" >100,00</text>
<polygon points="2351.8,900.2 2351.8,894.2 2357.8,894.2 2357.8,888.2 2363.8,888.2 2363.8,900.2" fill="#3d4fa9"/>
<rect x="0.75" y="287" width="168" height="50.5" fill="#fff" stroke="#a8a8a8" stroke-width="1.5"/>
<rect x="0" y="286.2" width="170" height="2.2" fill="#a5a5a5" />
<rect x="168.2" y="286.2" width="2.4" height="52" fill="#a9a9a9" />
<text x="21.5" y="320" font-size="26" fill="#262626" text-anchor="start" font-weight="normal" font-family='"Liberation Sans", sans-serif' textLength="38.5" lengthAdjust="spacingAndGlyphs" >E15</text>
<polygon points="153,305 167,305 160,294.5" fill="#6a6a6a"/>
<polygon points="153,317 167,317 160,328" fill="#6a6a6a"/>
<path d="M202,306.5 L220,323.5 M220,306.5 L202,323.5" stroke="#cdcdcd" stroke-width="3.6" stroke-linecap="round"/>
<path d="M258,315.5 L266.5,323.5 L282.5,307" stroke="#cdcdcd" stroke-width="3.6" stroke-linecap="round" stroke-linejoin="round" fill="none"/>
<text x="315" y="321" font-size="35" fill="#333" text-anchor="start" font-weight="normal" font-family='"Liberation Serif", serif' textLength="30" lengthAdjust="spacingAndGlyphs" font-style="italic">fx</text>
<rect x="360.5" y="298" width="1.5" height="30" fill="#e2e2e2" />
<polygon points="3329,306 3343,306 3336,318" fill="#555"/>
<polygon points="44.5,2019 44.5,2039 29.5,2029" fill="#b5b5b5"/>
<polygon points="76,2019 76,2039 90,2029" fill="#b5b5b5"/>
<path d="M122,2002 L122,2042 Q122,2047.5 127.5,2047.5 L309,2047.5 Q314.5,2047.5 314.5,2042 L314.5,2002 Z" fill="#ffffff" stroke="none"/>
<path d="M122,2001.5 L122,2042 Q122,2047.5 127.5,2047.5 L309,2047.5 Q314.5,2047.5 314.5,2042 L314.5,2001.5" fill="none" stroke="#bdbdbd" stroke-width="1.8"/>
<rect x="123" y="2000.5" width="190.5" height="3.5" fill="#ffffff" />
<rect x="128" y="2008" width="180" height="34" fill="url(#tabG)" />
<text x="156" y="2036" font-size="24.7" fill="#167a43" text-anchor="start" font-weight="bold" font-family='"Liberation Sans", sans-serif' textLength="123" lengthAdjust="spacingAndGlyphs" >Mes actual</text>
<path d="M354,2016.5 L354,2036.5 M344,2026.5 L364,2026.5" stroke="#4a4a4a" stroke-width="3.6"/>
<rect x="390.5" y="2005" width="1.5" height="39.5" fill="#cacaca" />
<text x="49.5" y="2086" font-size="23.5" fill="#4f4f4f" text-anchor="start" font-weight="normal" font-family='"Liberation Sans", sans-serif' textLength="53" lengthAdjust="spacingAndGlyphs" >Listo</text>
<g fill="none" stroke="#555" stroke-width="1.9" stroke-linecap="round" stroke-linejoin="round"><circle cx="154.8" cy="2066.8" r="3.6"/><path d="M143.2,2070.6 Q144,2068.6 146,2069.6 Q150.5,2073.2 155,2073.2 Q159.6,2073.2 163.8,2069.4 Q165.6,2068.4 166.4,2070.4 Q166.2,2072 161,2075.3 Q159.8,2076.3 160,2077.6"/><path d="M143.2,2070.6 Q143.4,2072.4 148.6,2075.4 Q150,2076.4 149.6,2078.6 L146.8,2088.6 Q146.4,2091.2 148.6,2091.2 Q150.2,2091.2 150.8,2089.2 L153.4,2082.6 L155.4,2084.6"/><path d="M158.6,2074.6 L171.2,2091 M171.2,2078.4 L158.4,2090.6"/></g>
<text x="179" y="2086" font-size="23.5" fill="#4f4f4f" text-anchor="start" font-weight="normal" font-family='"Liberation Sans", sans-serif' textLength="422" lengthAdjust="spacingAndGlyphs" >Accesibilidad: es necesario investigar</text>
<rect x="2720" y="2055.5" width="74" height="44.5" fill="#9d9d9d" />
<g fill="none" stroke="#fff" stroke-width="2"><rect x="2744.5" y="2064.5" width="25" height="25" rx="1"/><path d="M2752.8,2064.5 V2089.5 M2761.2,2064.5 V2089.5 M2744.5,2072.8 H2769.5 M2744.5,2081.2 H2769.5"/></g>
<g fill="none" stroke="#575757" stroke-width="2.4"><rect x="2816" y="2065" width="26" height="25"/><rect x="2821" y="2070" width="16" height="15"/></g>
<path d="M2824,2074 H2834 M2824,2077.5 H2834 M2824,2081 H2834" stroke="#575757" stroke-width="2"/>
<g fill="none" stroke="#575757" stroke-width="2.4"><rect x="2887" y="2065" width="26" height="25"/><path d="M2887,2079 H2903 V2065 M2896,2065 V2079"/></g>
<rect x="2952" y="2075.5" width="16" height="3.5" fill="#6a6a6a" />
<rect x="2982" y="2073.5" width="200" height="8.5" fill="#9b9b9b" rx="4.2"/>
<circle cx="3100" cy="2077.5" r="16" fill="#fff" stroke="#d0d0d0" stroke-width="1"/>
<path d="M3204,2069 V2086 M3195.5,2077.5 H3212.5" stroke="#6a6a6a" stroke-width="3.6"/>
<text x="3247.6" y="2087" font-size="26" fill="#4f4f4f" text-anchor="start" font-weight="normal" font-family='"Liberation Sans", sans-serif' textLength="62" lengthAdjust="spacingAndGlyphs" >163%</text>
<g fill="none" stroke="#fff" stroke-width="2.5" stroke-linejoin="round" stroke-linecap="round">
<path d="M50.8,52.6 V36.6 L64.2,24.8 L77.4,36.6 V52.6 H67.6 V43 H59.9 V52.6 Z"/>
</g>
<g fill="none" stroke="#fff" stroke-width="2.2" stroke-linejoin="round" opacity="0.42">
<path d="M107.5,26.8 H126.5 L131.2,31.5 V50.5 Q131.2,53.2 128.5,53.2 H107.5 Q104.8,53.2 104.8,50.5 V29.5 Q104.8,26.8 107.5,26.8 Z"/>
<path d="M110.8,27 V32.5 Q110.8,34.6 112.8,34.6 H120.6 Q122.4,34.6 122.4,32.5 V27"/>
<path d="M108.9,53 V43 Q108.9,41 110.9,41 H125.4 Q127.4,41 127.4,43 V53"/>
</g>
<g fill="none" stroke="#fff" stroke-width="2.5" stroke-linejoin="round" stroke-linecap="round">
<path d="M160.8,24.6 V35.4 H171.4"/>
<path d="M161.3,35 L168.5,27.6 Q173.5,23.5 178.5,24.2 Q185.8,25.6 185.6,33.8 Q185.3,38.6 181.4,42.4 L165.5,55.2"/>
<path d="M204.4,37.5 L210,43.8 L215.6,37.5"/>
<path d="M265.1,39.8 A13.1,13.1 0 1 1 258.6,28.5"/>
<path d="M256.3,33.6 H263.8 V26.2"/>
</g>
<circle cx="296.2" cy="39.8" r="2.6" fill="#fff"/>
<circle cx="306" cy="39.8" r="2.6" fill="#fff"/>
<circle cx="315.8" cy="39.8" r="2.6" fill="#fff"/>
<text x="1533" y="50" font-size="27.6" fill="#ffffff" text-anchor="start" font-weight="bold" font-family='"Liberation Sans", sans-serif' textLength="293" lengthAdjust="spacingAndGlyphs" >Presupuesto personal1</text>
<rect x="2716.8" y="19" width="558" height="42" rx="10" fill="#ffffff" fill-opacity="0.015" stroke="#ffffff" stroke-opacity="0.09" stroke-width="1.5"/>
<g fill="none" stroke="#93c4a5" stroke-width="2.4" stroke-linecap="round"><circle cx="2741.2" cy="38.8" r="10"/><path d="M2748.5,46.2 L2754.5,52.2"/></g>
<text x="2771" y="50" font-size="25.5" fill="#98c8a9" text-anchor="start" font-weight="bold" font-family='"Liberation Sans", sans-serif' textLength="278.5" lengthAdjust="spacingAndGlyphs" >Search (Cmd + Ctrl + U)</text>
<g fill="none" stroke="#fff" stroke-width="2.2" stroke-linejoin="round">
<circle cx="3313.9" cy="36.3" r="5"/>
<path d="M3305,44.8 H3322.8 Q3324,55.4 3313.9,55.4 Q3303.8,55.4 3305,44.8 Z"/>
<path d="M3324,24.5 H3332.3 Q3335.6,24.5 3335.6,27.8 V32.4 Q3335.6,35.7 3332.3,35.7 H3328.6 L3324.6,39.6 V35.7 Q3320.7,35.7 3320.7,32.4 V27.8 Q3320.7,24.5 3324,24.5 Z"/>
</g>
<text x="23" y="114.5" font-size="28" fill="#252525" text-anchor="start" font-weight="bold" font-family='"Liberation Sans", sans-serif' textLength="69" lengthAdjust="spacingAndGlyphs" >Inicio</text>
<rect x="22" y="126" width="70" height="6.2" fill="#1c6b3b" rx="3.1"/>
<text x="139" y="114.5" font-size="28" fill="#252525" text-anchor="start" font-weight="normal" font-family='"Liberation Sans", sans-serif' textLength="96" lengthAdjust="spacingAndGlyphs" stroke="#252525" stroke-width="0.35" >Insertar</text>
<text x="289" y="114.5" font-size="28" fill="#252525" text-anchor="start" font-weight="normal" font-family='"Liberation Sans", sans-serif' textLength="271" lengthAdjust="spacingAndGlyphs" stroke="#252525" stroke-width="0.35" >Disposición de página</text>
<text x="615.5" y="114.5" font-size="28" fill="#252525" text-anchor="start" font-weight="normal" font-family='"Liberation Sans", sans-serif' textLength="112.5" lengthAdjust="spacingAndGlyphs" stroke="#252525" stroke-width="0.35" >Fórmulas</text>
<text x="779.5" y="114.5" font-size="28" fill="#252525" text-anchor="start" font-weight="normal" font-family='"Liberation Sans", sans-serif' textLength="70.5" lengthAdjust="spacingAndGlyphs" stroke="#252525" stroke-width="0.35" >Datos</text>
<text x="901" y="114.5" font-size="28" fill="#252525" text-anchor="start" font-weight="normal" font-family='"Liberation Sans", sans-serif' textLength="89.5" lengthAdjust="spacingAndGlyphs" stroke="#252525" stroke-width="0.35" >Revisar</text>
<text x="1041" y="114.5" font-size="28" fill="#252525" text-anchor="start" font-weight="normal" font-family='"Liberation Sans", sans-serif' textLength="61.5" lengthAdjust="spacingAndGlyphs" stroke="#252525" stroke-width="0.35" >Vista</text>
<rect x="3157.3" y="85.1" width="181.3" height="45.5" rx="8.5" fill="#fff" stroke="#cdcdcd" stroke-width="1.5"/>
<g fill="none" stroke="#0f6b3a" stroke-width="2" stroke-linejoin="miter">
<path d="M3175,104.5 V119.6 H3193 V115.5"/>
<path d="M3179.6,112.3 Q3181.5,102.8 3190.5,101.8 V96.6 L3197.5,104.8 L3190.5,113 V108 Q3183.5,108 3179.6,112.3 Z"/>
</g>
<text x="3209.1" y="117.9" font-size="25.7" fill="#0f6b3a" text-anchor="start" font-weight="bold" font-family='"Liberation Sans", sans-serif' textLength="117.4" lengthAdjust="spacingAndGlyphs" >Compartir</text>
<rect x="288.25" y="144" width="1.5" height="123" fill="#c9c9c9" />
<rect x="828.25" y="144" width="1.5" height="123" fill="#c9c9c9" />
<rect x="1151.25" y="144" width="1.5" height="123" fill="#c9c9c9" />
<rect x="1464.25" y="144" width="1.5" height="123" fill="#c9c9c9" />
<rect x="1816.25" y="144" width="1.5" height="123" fill="#c9c9c9" />
<rect x="2214.25" y="144" width="1.5" height="123" fill="#c9c9c9" />
<rect x="2552.25" y="144" width="1.5" height="123" fill="#c9c9c9" />
<rect x="3004.25" y="144" width="1.5" height="123" fill="#c9c9c9" />
<rect x="501.25" y="224.3" width="1.5" height="35.39999999999998" fill="#c9c9c9" />
<rect x="607.25" y="224.5" width="1.5" height="35.0" fill="#c9c9c9" />
<rect x="1017.25" y="160" width="1.5" height="36" fill="#c9c9c9" />
<rect x="1017.25" y="224.5" width="1.5" height="35.0" fill="#c9c9c9" />
<rect x="1677.25" y="224.5" width="1.5" height="35.0" fill="#c9c9c9" />
<path d="M37.7,209 V165.7 H72.6 V178" fill="none" stroke="#f3e4c4" stroke-width="6.5"/>
<path d="M34.6,209.6 V162.4 H75.8 V178 M41,209.6 V169 H69.4 V178" fill="none" stroke="#f0c9ae" stroke-width="1.3"/>
<rect x="34" y="205.2" width="27" height="4.6" fill="#f3e4c4" />
<path d="M34.6,209.6 H60.3 M41,203.3 H60.3" stroke="#f0c9ae" stroke-width="1.3"/>
<path d="M43,169.3 V161 H49.5 A5.8,5.8 0 0 1 61,161 H67.5 V169.3 Z" fill="#f3f3f3" stroke="#bdbdbd" stroke-width="1.8"/>
<rect x="61" y="179" width="26.6" height="33.8" fill="#f4f4f4" stroke="#ababab" stroke-width="2"/>
<path d="M98.6,180 L104.1,186 L109.6,180" fill="none" stroke="#a9a9a9" stroke-width="2.4" stroke-linecap="round" stroke-linejoin="round"/>
<text x="39" y="241.8" font-size="23" fill="#8c8c8c" text-anchor="start" font-weight="normal" font-family='"Liberation Sans", sans-serif' textLength="56.4" lengthAdjust="spacingAndGlyphs" >Pegar</text>
<path d="M136.3,150.5 L148,175 M148,150.5 L136.3,175" stroke="#333" stroke-width="1.4" fill="none"/>
<circle cx="135.9" cy="178.3" r="3.4" fill="#fff" stroke="#0f78cf" stroke-width="1.9"/>
<circle cx="148.1" cy="178.3" r="3.4" fill="#fff" stroke="#0f78cf" stroke-width="1.9"/>
<text x="171" y="175" font-size="23.3" fill="#1f1f1f" text-anchor="start" font-weight="normal" font-family='"Liberation Sans", sans-serif' textLength="62" lengthAdjust="spacingAndGlyphs" stroke="#1f1f1f" stroke-width="0.3" >Cortar</text>
<path d="M135.8,221.3 H127.2 V195 H138 L141.6,198.2" fill="#f8f8f8" stroke="#222" stroke-width="1.9"/>
<path d="M139.1,225 V201.2 H149.6 L156.6,208 V225 Z" fill="#f8f8f8" stroke="#222" stroke-width="1.9"/>
<path d="M149.6,201.2 V208 H156.6" fill="none" stroke="#222" stroke-width="1.6"/>
<path d="M144,216.4 H151.8 M144,219.4 H151.8" stroke="#444" stroke-width="1.3"/>
<text x="171" y="219" font-size="23.3" fill="#1f1f1f" text-anchor="start" font-weight="normal" font-family='"Liberation Sans", sans-serif' textLength="64" lengthAdjust="spacingAndGlyphs" stroke="#1f1f1f" stroke-width="0.3" >Copiar</text>
<path d="M249.4,207.8 L255.05,213.8 L260.7,207.8" fill="none" stroke="#2b2b2b" stroke-width="2.6" stroke-linecap="round" stroke-linejoin="round"/>
<path d="M127.3,251.8 Q134,246 140.2,246.6 L150.5,257 L140.3,267.2 Z" fill="#f8f8f8" stroke="#f07b2b" stroke-width="2"/>
<path d="M129.5,254 L146.8,261 L140.3,267.2 Z" fill="#fbd27a" stroke="#f07b2b" stroke-width="1.6" stroke-linejoin="round"/>
<path d="M140,246.4 L144,242.6 L154,252.4 L150.3,256.4 Z" fill="#f8f8f8" stroke="#222" stroke-width="1.9" stroke-linejoin="round"/>
<path d="M146.5,245.2 L154.3,237.6 Q156.5,236 158,237.8 Q159.3,239.4 157.6,241.3 L149.7,248.6" fill="#f8f8f8" stroke="#222" stroke-width="1.9" stroke-linejoin="round"/>
<text x="171" y="262.5" font-size="23.3" fill="#1f1f1f" text-anchor="start" font-weight="normal" font-family='"Liberation Sans", sans-serif' textLength="81" lengthAdjust="spacingAndGlyphs" stroke="#1f1f1f" stroke-width="0.3" >Formato</text>
<rect x="309.3" y="154.3" width="281.4" height="47.1" rx="5.5" fill="#fff" stroke="#c4c4c4" stroke-width="1.3"/>
<text x="321.7" y="185.9" font-size="25.2" fill="#111" text-anchor="start" font-weight="normal" font-family='"Liberation Sans", sans-serif' textLength="177.3" lengthAdjust="spacingAndGlyphs" >Calibri (Cuerpo)</text>
<path d="M570.2,175.4 L575.9000000000001,182.2 L581.6,175.4" fill="none" stroke="#2b2b2b" stroke-width="2.1" stroke-linecap="round" stroke-linejoin="round"/>
<rect x="595.8" y="154.3" width="106.8" height="47.1" rx="5.5" fill="#fff" stroke="#c4c4c4" stroke-width="1.3"/>
<text x="607" y="185.9" font-size="25.2" fill="#111" text-anchor="start" font-weight="normal" font-family='"Liberation Sans", sans-serif' textLength="25" lengthAdjust="spacingAndGlyphs" >10</text>
<path d="M682.4,175.6 L688.0,182.2 L693.6,175.6" fill="none" stroke="#2b2b2b" stroke-width="2.1" stroke-linecap="round" stroke-linejoin="round"/>
<path d="M717.6,188 L727.9,162.4 L738.2,188 M721.6,178.9 H734.2" fill="none" stroke="#2e2e2e" stroke-width="2.4"/>
<path d="M737.6,169.4 L741.9000000000001,164.9 L746.2,169.4" fill="none" stroke="#1979ca" stroke-width="2.2" stroke-linecap="round" stroke-linejoin="round"/>
<path d="M772.8,188 L781.1,168.2 L789.2,188 M776,180.5 H786.2" fill="none" stroke="#2e2e2e" stroke-width="2.4"/>
<path d="M789.6,164.9 L794.0,169.4 L798.4,164.9" fill="none" stroke="#1979ca" stroke-width="2.2" stroke-linecap="round" stroke-linejoin="round"/>
<text x="322.6" y="250.1" font-size="29" fill="#2e2e2e" text-anchor="start" font-weight="bold" font-family='"Liberation Sans", sans-serif' textLength="18.6" lengthAdjust="spacingAndGlyphs" >N</text>
<text x="374.5" y="250.1" font-size="29" fill="#2e2e2e" text-anchor="start" font-weight="normal" font-family='"Liberation Sans", sans-serif' textLength="18.5" lengthAdjust="spacingAndGlyphs" font-style="italic">K</text>
<text x="428.8" y="250.1" font-size="29" fill="#2e2e2e" text-anchor="start" font-weight="normal" font-family='"Liberation Sans", sans-serif' textLength="15.5" lengthAdjust="spacingAndGlyphs" font-style="italic">S</text>
<rect x="428.9" y="252.2" width="16.1" height="1.9" fill="#2e2e2e" />
<path d="M467.4,239.4 L472.95,246 L478.5,239.4" fill="none" stroke="#2b2b2b" stroke-width="2.6" stroke-linecap="round" stroke-linejoin="round"/>
<rect x="528.5" y="227.6" width="27.1" height="26.7" fill="#f8f8f8" stroke="#1c1c1c" stroke-width="2"/>
<path d="M542,227.6 V254.3 M528.5,241 H555.6" stroke="#1c1c1c" stroke-width="2"/>
<path d="M572.7,239.4 L578.8,246 L584.9,239.4" fill="none" stroke="#2b2b2b" stroke-width="2.6" stroke-linecap="round" stroke-linejoin="round"/>
<rect x="633.2" y="250.4" width="31.8" height="7" fill="#e6e6e6" />
<path d="M637.8,239.6 L649.5,228 L659.3,237.8 L647.4,249.4 Z" fill="#f8f8f8" stroke="#2b2b2b" stroke-width="1.9" stroke-linejoin="miter"/>
<path d="M652,237.3 V228.5 Q652,226.3 650,226.3 Q648.2,226.3 648.2,228.5 V231" fill="none" stroke="#2b2b2b" stroke-width="1.9"/>
<path d="M655.6,234 Q661.5,234.5 661.6,240 L660.7,246.3 L658.5,237.5 Z" fill="#0e63b8"/>
<path d="M679.1,239.4 L684.9000000000001,246.2 L690.7,239.4" fill="none" stroke="#2b2b2b" stroke-width="2.6" stroke-linecap="round" stroke-linejoin="round"/>
<path d="M716.5,247.9 L725.4,226 L734.3,247.9 M719.6,240.9 H731.2" fill="none" stroke="#2e2e2e" stroke-width="2.3"/>
<rect x="708.8" y="250" width="32.3" height="7.8" fill="#ff0000" />
<path d="M755.1,239.4 L760.9000000000001,246.2 L766.7,239.4" fill="none" stroke="#2b2b2b" stroke-width="2.6" stroke-linecap="round" stroke-linejoin="round"/>
<rect x="859" y="161.45" width="28" height="2.1" fill="#222" />
<rect x="867" y="169.75" width="12" height="2.1" fill="#222" />
<rect x="859" y="178.14999999999998" width="28" height="2.1" fill="#222" />
<rect x="901" y="154.3" width="48" height="47.5" fill="#bdbdbd" rx="5"/>
<rect x="911" y="167.95" width="28" height="2.1" fill="#222" />
<rect x="919.5" y="175.95" width="11.799999999999955" height="2.1" fill="#222" />
<rect x="911" y="183.95" width="28" height="2.1" fill="#222" />
<rect x="963" y="175.25" width="28" height="2.1" fill="#222" />
<rect x="971.3" y="183.45" width="11.200000000000045" height="2.1" fill="#222" />
<rect x="963" y="191.95" width="28" height="2.1" fill="#222" />
<rect x="859" y="227.95" width="28" height="2.1" fill="#222" />
<rect x="859" y="235.95" width="19.5" height="2.1" fill="#222" />
<rect x="859" y="243.95" width="28" height="2.1" fill="#222" />
<rect x="859" y="251.95" width="19.5" height="2.1" fill="#222" />
<rect x="911" y="227.95" width="28" height="2.1" fill="#222" />
<rect x="915" y="235.95" width="20" height="2.1" fill="#222" />
<rect x="911" y="243.95" width="28" height="2.1" fill="#222" />
<rect x="915" y="251.95" width="20" height="2.1" fill="#222" />
<rect x="963" y="227.95" width="28" height="2.1" fill="#222" />
<rect x="971.5" y="235.95" width="19.5" height="2.1" fill="#222" />
<rect x="963" y="243.95" width="28" height="2.1" fill="#222" />
<rect x="971.5" y="251.95" width="19.5" height="2.1" fill="#222" />
<text x="0" y="0" font-size="20" fill="#2b2b2b" font-family='"Liberation Sans", sans-serif' transform="translate(1048.5,185) rotate(-45)" textLength="23" lengthAdjust="spacingAndGlyphs">ab</text>
<path d="M1053.6,191.3 L1074.3,170.5 M1067.2,170.6 H1074.4 V177.7" fill="none" stroke="#0a7bd0" stroke-width="1.9"/>
<path d="M1089,175.8 L1094.85,181.8 L1100.7,175.8" fill="none" stroke="#2b2b2b" stroke-width="2.6" stroke-linecap="round" stroke-linejoin="round"/>
<rect x="1044.9" y="227.85" width="28.09999999999991" height="2.1" fill="#222" />
<rect x="1061" y="235.85" width="12" height="2.1" fill="#222" />
<rect x="1061" y="243.95" width="12" height="2.1" fill="#222" />
<rect x="1044.9" y="251.85" width="28.09999999999991" height="2.1" fill="#222" />
<path d="M1045.8,240.9 H1056.9 M1050.7,236.2 L1045.9,240.9 L1050.7,245.6" fill="none" stroke="#0a7bd0" stroke-width="2.1"/>
<rect x="1097" y="227.85" width="28" height="2.1" fill="#222" />
<rect x="1113" y="235.85" width="12" height="2.1" fill="#222" />
<rect x="1113" y="243.95" width="12" height="2.1" fill="#222" />
<rect x="1097" y="251.85" width="28" height="2.1" fill="#222" />
<path d="M1097,240.9 H1108.2 M1103.6,236.2 L1108.4,240.9 L1103.6,245.6" fill="none" stroke="#0a7bd0" stroke-width="2.1"/>
<text x="1182" y="177.7" font-size="20" fill="#2b2b2b" text-anchor="start" font-weight="normal" font-family='"Liberation Sans", sans-serif' textLength="23" lengthAdjust="spacingAndGlyphs" >ab</text>
<text x="1182" y="191.7" font-size="20" fill="#2b2b2b" text-anchor="start" font-weight="normal" font-family='"Liberation Sans", sans-serif' textLength="9.5" lengthAdjust="spacingAndGlyphs" >c</text>
<path d="M1207.6,178.6 Q1209.4,186.6 1200.5,186.8 H1194.5 M1200,181 L1194,186.8 L1200,192.8" fill="none" stroke="#0a7bd0" stroke-width="1.9"/>
<text x="1222" y="185.5" font-size="23" fill="#1f1f1f" text-anchor="start" font-weight="normal" font-family='"Liberation Sans", sans-serif' textLength="126" lengthAdjust="spacingAndGlyphs" stroke="#1f1f1f" stroke-width="0.3" >Ajustar texto</text>
<path d="M1359.5,176.3 L1365.25,182.5 L1371,176.3" fill="none" stroke="#2b2b2b" stroke-width="2.6" stroke-linecap="round" stroke-linejoin="round"/>
<rect x="1178.5" y="227.4" width="27" height="27" fill="#f8f8f8" stroke="#222" stroke-width="2"/>
<rect x="1191.2" y="227.4" width="1.6" height="6" fill="#444" />
<rect x="1191.2" y="248.5" width="1.6" height="6" fill="#444" />
<rect x="1178.5" y="233.6" width="27" height="14.6" fill="#f8f8f8" stroke="#0a7bd0" stroke-width="2"/>
<path d="M1182,240.9 H1202 M1186,237 L1182,240.9 L1186,244.8 M1198,237 L1202,240.9 L1198,244.8" fill="none" stroke="#0a7bd0" stroke-width="1.9"/>
<text x="1222" y="250" font-size="23" fill="#1f1f1f" text-anchor="start" font-weight="normal" font-family='"Liberation Sans", sans-serif' textLength="192" lengthAdjust="spacingAndGlyphs" stroke="#1f1f1f" stroke-width="0.3" >Combinar y centrar</text>
<path d="M1425,240.3 L1431.0,246.5 L1437,240.3" fill="none" stroke="#2b2b2b" stroke-width="2.6" stroke-linecap="round" stroke-linejoin="round"/>
<rect x="1485.5" y="154.3" width="308.5" height="47.1" rx="5.5" fill="#fff" stroke="#c4c4c4" stroke-width="1.3"/>
<text x="1497.5" y="186" font-size="25.2" fill="#111" text-anchor="start" font-weight="normal" font-family='"Liberation Sans", sans-serif' textLength="140.5" lengthAdjust="spacingAndGlyphs" >Contabilidad</text>
<path d="M1774,175.6 L1780.0,182.2 L1786,175.6" fill="none" stroke="#2b2b2b" stroke-width="2.1" stroke-linecap="round" stroke-linejoin="round"/>
<path d="M1508,226.3 V258 M1514.3,234.5 Q1513.3,230.2 1508,230.2 Q1501.3,230.2 1501.3,236.3 Q1501.3,241 1508,242.3 Q1515,243.6 1515,249.5 Q1515,254.6 1508,254.6 Q1501.5,254.6 1500.6,249.3" fill="none" stroke="#2b2b2b" stroke-width="1.7" stroke-linecap="round"/>
<path d="M1539.5,239.6 L1545.1,246 L1550.7,239.6" fill="none" stroke="#2b2b2b" stroke-width="2.6" stroke-linecap="round" stroke-linejoin="round"/>
<g fill="none" stroke="#2b2b2b" stroke-width="1.7"><ellipse cx="1575.5" cy="234.6" rx="4.8" ry="5.6"/><ellipse cx="1594" cy="249" rx="4.8" ry="5.6"/><path d="M1597,228.3 L1576.3,255.4"/></g>
<path d="M1638.2,231 Q1645.6,231 1645.5,239.5 Q1645,249.5 1632.4,254.6 L1631.6,253 Q1638,248.5 1638.5,244.8 Q1631,245 1631,238 Q1631.2,231 1638.2,231 Z" fill="#2b2b2b"/>
<path d="M1720.5,234.8 H1704.2 M1710.6,228.4 L1704,234.8 L1710.6,241.2" fill="none" stroke="#0a7bd0" stroke-width="1.9"/>
<text x="1719.5" y="238.8" font-size="17.5" fill="#2b2b2b" text-anchor="start" font-weight="normal" font-family='"Liberation Sans", sans-serif' textLength="13" lengthAdjust="spacingAndGlyphs" >,0</text>
<text x="1710.5" y="255.3" font-size="17.5" fill="#2b2b2b" text-anchor="start" font-weight="normal" font-family='"Liberation Sans", sans-serif' textLength="22" lengthAdjust="spacingAndGlyphs" >,00</text>
<text x="1762" y="238.8" font-size="17.5" fill="#2b2b2b" text-anchor="start" font-weight="normal" font-family='"Liberation Sans", sans-serif' textLength="22" lengthAdjust="spacingAndGlyphs" >,00</text>
<path d="M1755,248.6 H1771.5 M1765,242.2 L1771.6,248.6 L1765,255" fill="none" stroke="#0a7bd0" stroke-width="1.9"/>
<text x="1771" y="255.3" font-size="17.5" fill="#2b2b2b" text-anchor="start" font-weight="normal" font-family='"Liberation Sans", sans-serif' textLength="13" lengthAdjust="spacingAndGlyphs" >,0</text>
<rect x="1860.3" y="161.1" width="53.5" height="41.599999999999994" fill="#f9f9f9"/>
<rect x="1868.7" y="161.1" width="1.6" height="41.599999999999994" fill="#5a5550" />
<rect x="1903.4" y="161.1" width="1.6" height="41.599999999999994" fill="#5a5550" />
<rect x="1860.3" y="173.79999999999998" width="53.5" height="1.6" fill="#5a5550" />
<rect x="1860.3" y="187.6" width="53.5" height="1.6" fill="#5a5550" />
<rect x="1860.3" y="161.1" width="53.5" height="41.599999999999994" fill="none" stroke="#222" stroke-width="1.9"/>
<rect x="1869.8" y="161.1" width="24.4" height="13.5" fill="#ff8a95" stroke="#d50f1c" stroke-width="1.7"/>
<rect x="1869.8" y="175" width="16.2" height="13.4" fill="#73b4ea" stroke="#0455a8" stroke-width="1.7"/>
<rect x="1869.8" y="188.6" width="28.8" height="14.1" fill="#ff8a95" stroke="#d50f1c" stroke-width="1.7"/>
<path d="M1929.3,179.2 L1935.05,186.2 L1940.8,179.2" fill="none" stroke="#2b2b2b" stroke-width="2.6" stroke-linecap="round" stroke-linejoin="round"/>
<text x="1857" y="241" font-size="22.5" fill="#1f1f1f" text-anchor="start" font-weight="normal" font-family='"Liberation Sans", sans-serif' textLength="82.5" lengthAdjust="spacingAndGlyphs" stroke="#1f1f1f" stroke-width="0.3" >Formato</text>
<text x="1842" y="265" font-size="22.5" fill="#1f1f1f" text-anchor="start" font-weight="normal" font-family='"Liberation Sans", sans-serif' textLength="113" lengthAdjust="spacingAndGlyphs" stroke="#1f1f1f" stroke-width="0.3" >condicional</text>
<rect x="1990.5" y="161.1" width="53.40000000000009" height="41.599999999999994" fill="#f9f9f9"/>
<rect x="2006.8" y="161.1" width="1.6" height="41.599999999999994" fill="#5a5550" />
<rect x="2025.4" y="161.1" width="1.6" height="41.599999999999994" fill="#5a5550" />
<rect x="1990.5" y="173.79999999999998" width="53.40000000000009" height="1.6" fill="#5a5550" />
<rect x="1990.5" y="187.6" width="53.40000000000009" height="1.6" fill="#5a5550" />
<rect x="1990.5" y="161.1" width="53.40000000000009" height="41.599999999999994" fill="none" stroke="#222" stroke-width="1.9"/>
<rect x="2007.6" y="174.6" width="36.3" height="28.1" fill="#73b4ea" stroke="#0455a8" stroke-width="1.8"/>
<rect x="2025.4" y="174.6" width="1.7" height="28.1" fill="#0455a8" />
<rect x="2007.6" y="187.6" width="36.3" height="1.7" fill="#0455a8" />
<path d="M2005,212 L2050,171" stroke="#f2f2f2" stroke-width="7"/>
<path d="M2018,200.5 L2049,172.0 Q2053,169.0 2053.3,171.5 Q2053.3,174.5 2049.5,178.5 L2022.5,206.0 Z" fill="#f8f8f8" stroke="#222" stroke-width="1.8" stroke-linejoin="round"/>
<path d="M2012,210.0 Q2014.5,201.0 2020,200.0 Q2025.5,201.0 2024,207.5 Q2022,213.5 2014.5,213.5 Q2008,213.8 2004,211.3 Q2008.5,211.5 2012,210.0 Z" fill="#73b4ea" stroke="#0455a8" stroke-width="1.8" stroke-linejoin="round"/>
<path d="M2059.3,179.2 L2065.05,186.2 L2070.8,179.2" fill="none" stroke="#2b2b2b" stroke-width="2.6" stroke-linecap="round" stroke-linejoin="round"/>
<text x="1969.5" y="241" font-size="22.5" fill="#1f1f1f" text-anchor="start" font-weight="normal" font-family='"Liberation Sans", sans-serif' textLength="118.5" lengthAdjust="spacingAndGlyphs" stroke="#1f1f1f" stroke-width="0.3" >Dar formato</text>
<text x="1973.8" y="265" font-size="22.5" fill="#1f1f1f" text-anchor="start" font-weight="normal" font-family='"Liberation Sans", sans-serif' textLength="110" lengthAdjust="spacingAndGlyphs" stroke="#1f1f1f" stroke-width="0.3" >como tabla</text>
<rect x="2107.6" y="161.1" width="53.20000000000027" height="41.599999999999994" fill="#f9f9f9"/>
<rect x="2116.1" y="161.1" width="1.6" height="41.599999999999994" fill="#5a5550" />
<rect x="2150.7999999999997" y="161.1" width="1.6" height="41.599999999999994" fill="#5a5550" />
<rect x="2107.6" y="169.89999999999998" width="53.20000000000027" height="1.6" fill="#5a5550" />
<rect x="2107.6" y="191.6" width="53.20000000000027" height="1.6" fill="#5a5550" />
<rect x="2107.6" y="161.1" width="53.20000000000027" height="41.599999999999994" fill="none" stroke="#222" stroke-width="1.9"/>
<rect x="2116.9" y="170.7" width="34.7" height="21.7" fill="#73b4ea" stroke="#0455a8" stroke-width="1.8"/>
<path d="M2122,212 L2167,171" stroke="#f2f2f2" stroke-width="7"/>
<path d="M2135,200.5 L2166,172.0 Q2170,169.0 2170.3,171.5 Q2170.3,174.5 2166.5,178.5 L2139.5,206.0 Z" fill="#f8f8f8" stroke="#222" stroke-width="1.8" stroke-linejoin="round"/>
<path d="M2129,210.0 Q2131.5,201.0 2137,200.0 Q2142.5,201.0 2141,207.5 Q2139,213.5 2131.5,213.5 Q2125,213.8 2121,211.3 Q2125.5,211.5 2129,210.0 Z" fill="#73b4ea" stroke="#0455a8" stroke-width="1.8" stroke-linejoin="round"/>
<path d="M2176.1,179.2 L2181.8999999999996,186.2 L2187.7,179.2" fill="none" stroke="#2b2b2b" stroke-width="2.6" stroke-linecap="round" stroke-linejoin="round"/>
<text x="2112" y="241" font-size="22.5" fill="#1f1f1f" text-anchor="start" font-weight="normal" font-family='"Liberation Sans", sans-serif' textLength="65" lengthAdjust="spacingAndGlyphs" stroke="#1f1f1f" stroke-width="0.3" >Estilos</text>
<text x="2103" y="265" font-size="22.5" fill="#1f1f1f" text-anchor="start" font-weight="normal" font-family='"Liberation Sans", sans-serif' textLength="83" lengthAdjust="spacingAndGlyphs" stroke="#1f1f1f" stroke-width="0.3" >de celda</text>
<rect x="2245.2" y="161.3" width="53.5" height="41.099999999999994" fill="#f9f9f9"/>
<rect x="2262.2" y="161.3" width="1.6" height="41.099999999999994" fill="#5a5550" />
<rect x="2280.3999999999996" y="161.3" width="1.6" height="41.099999999999994" fill="#5a5550" />
<rect x="2245.2" y="173.7" width="53.5" height="1.6" fill="#5a5550" />
<rect x="2245.2" y="188.39999999999998" width="53.5" height="1.6" fill="#5a5550" />
<rect x="2245.2" y="161.3" width="53.5" height="41.099999999999994" fill="none" stroke="#222" stroke-width="1.9"/>
<path d="M2253,174.5 H2303.7 V189.2 H2253 Z" fill="#73b4ea" stroke="#0455a8" stroke-width="1.8"/>
<rect x="2280.4" y="174.5" width="1.7" height="14.7" fill="#0455a8" />
<path d="M2241,181.5 H2266" stroke="#f2f2f2" stroke-width="6"/>
<path d="M2242,180.2 H2266 M2242,183 H2266" stroke="#0a7bd0" stroke-width="1.3"/>
<path d="M2253.6,168.4 L2241.2,181.6 L2253.6,194.2" fill="none" stroke="#0a7bd0" stroke-width="1.9"/>
<path d="M2314.3,179.4 L2320.05,186.2 L2325.8,179.4" fill="none" stroke="#2b2b2b" stroke-width="2.6" stroke-linecap="round" stroke-linejoin="round"/>
<text x="2244.5" y="242" font-size="22.5" fill="#1f1f1f" text-anchor="start" font-weight="normal" font-family='"Liberation Sans", sans-serif' textLength="76.5" lengthAdjust="spacingAndGlyphs" stroke="#1f1f1f" stroke-width="0.3" >Insertar</text>
<rect x="2345.3" y="161.3" width="53.5" height="41.099999999999994" fill="#f9f9f9"/>
<rect x="2361.7999999999997" y="161.3" width="1.6" height="41.099999999999994" fill="#5a5550" />
<rect x="2380.1" y="161.3" width="1.6" height="41.099999999999994" fill="#5a5550" />
<rect x="2345.3" y="161.3" width="53.5" height="41.099999999999994" fill="none" stroke="#222" stroke-width="1.9"/>
<path d="M2344.3,175.1 H2352.3 M2344.3,189.2 H2352.3" stroke="#222" stroke-width="1.9"/>
<rect x="2343.3" y="175.9" width="3.2" height="12.5" fill="#f0f0f0" />
<path d="M2352.3,174.6 H2380 L2385.5,181.9 L2380,189.2 H2352.3 Z" fill="#73b4ea" stroke="#0455a8" stroke-width="1.8"/>
<rect x="2368.3" y="174.6" width="1.7" height="14.6" fill="#0455a8" />
<path d="M2380,172.3 L2402,193.5 M2402,172.3 L2380,193.5" stroke="#f2f2f2" stroke-width="5"/>
<path d="M2380,172.3 L2402,193.5 M2402,172.3 L2380,193.5" stroke="#e8202a" stroke-width="1.9"/>
<path d="M2414.5,179.4 L2420.1,186.2 L2425.7,179.4" fill="none" stroke="#2b2b2b" stroke-width="2.6" stroke-linecap="round" stroke-linejoin="round"/>
<text x="2345" y="242" font-size="22.5" fill="#1f1f1f" text-anchor="start" font-weight="normal" font-family='"Liberation Sans", sans-serif' textLength="77.5" lengthAdjust="spacingAndGlyphs" stroke="#1f1f1f" stroke-width="0.3" >Eliminar</text>
<rect x="2445.5" y="161.3" width="53.30000000000018" height="41.099999999999994" fill="#f9f9f9"/>
<rect x="2457.8999999999996" y="161.3" width="1.6" height="41.099999999999994" fill="#5a5550" />
<rect x="2484.1" y="161.3" width="1.6" height="41.099999999999994" fill="#5a5550" />
<rect x="2445.5" y="173.89999999999998" width="53.30000000000018" height="1.6" fill="#5a5550" />
<rect x="2445.5" y="188.1" width="53.30000000000018" height="1.6" fill="#5a5550" />
<rect x="2445.5" y="161.3" width="53.30000000000018" height="41.099999999999994" fill="none" stroke="#222" stroke-width="1.9"/>
<rect x="2458.7" y="174.7" width="26.9" height="14.2" fill="#73b4ea" stroke="#0455a8" stroke-width="1.8"/>
<path d="M2456.9,153 H2487.3 M2456.9,150 V156 M2487.3,150 V156" stroke="#0a7bd0" stroke-width="1.8"/>
<path d="M2514.4,179.4 L2520.05,186.2 L2525.7,179.4" fill="none" stroke="#2b2b2b" stroke-width="2.6" stroke-linecap="round" stroke-linejoin="round"/>
<text x="2442.5" y="242" font-size="22.5" fill="#1f1f1f" text-anchor="start" font-weight="normal" font-family='"Liberation Sans", sans-serif' textLength="82.5" lengthAdjust="spacingAndGlyphs" stroke="#1f1f1f" stroke-width="0.3" >Formato</text>
<path d="M2607.8,156.5 V153 H2585 L2596.2,165.8 L2585,178.8 H2607.8 V175.3" fill="none" stroke="#2b2b2b" stroke-width="1.9"/>
<text x="2625" y="174" font-size="22.5" fill="#1f1f1f" text-anchor="start" font-weight="normal" font-family='"Liberation Sans", sans-serif' textLength="99" lengthAdjust="spacingAndGlyphs" stroke="#1f1f1f" stroke-width="0.3" >Autosuma</text>
<path d="M2737.5,163.8 L2743.25,170 L2749,163.8" fill="none" stroke="#2b2b2b" stroke-width="2.6" stroke-linecap="round" stroke-linejoin="round"/>
<rect x="2581.4" y="197.6" width="29.4" height="25" fill="#f8f8f8" stroke="#2b2b2b" stroke-width="2"/>
<rect x="2581.4" y="200.6" width="29.4" height="1.5" fill="#2b2b2b" />
<path d="M2595.2,204.5 V219 M2589,212.6 L2595.2,219 L2601.4,212.6" fill="none" stroke="#0a7bd0" stroke-width="1.9"/>
<text x="2625" y="218" font-size="22.5" fill="#1f1f1f" text-anchor="start" font-weight="normal" font-family='"Liberation Sans", sans-serif' textLength="80" lengthAdjust="spacingAndGlyphs" stroke="#1f1f1f" stroke-width="0.3" >Rellenar</text>
<path d="M2718,207.8 L2724.0,214 L2730,207.8" fill="none" stroke="#2b2b2b" stroke-width="2.6" stroke-linecap="round" stroke-linejoin="round"/>
<path d="M2581.3,257.8 L2599.9,240.3 L2610.2,250.3 L2591.4,268 Z" fill="#f8f8f8" stroke="#8f2aa0" stroke-width="2" stroke-linejoin="miter"/>
<path d="M2581.3,257.8 L2586.8,252.4 L2597.2,262.5 L2591.4,268 Z" fill="#d58ed9" stroke="#8f2aa0" stroke-width="2"/>
<text x="2625" y="262" font-size="22.5" fill="#1f1f1f" text-anchor="start" font-weight="normal" font-family='"Liberation Sans", sans-serif' textLength="61" lengthAdjust="spacingAndGlyphs" stroke="#1f1f1f" stroke-width="0.3" >Borrar</text>
<path d="M2700,251.8 L2706.0,258 L2712,251.8" fill="none" stroke="#2b2b2b" stroke-width="2.6" stroke-linecap="round" stroke-linejoin="round"/>
<path d="M2767.6,179.7 L2777,156.6 L2786.4,179.7 M2770.8,172 H2783.2" fill="none" stroke="#0a7bd0" stroke-width="2"/>
<path d="M2768,185.5 H2784.6 L2768.3,206.5 H2785.2" fill="none" stroke="#2b2b2b" stroke-width="1.9"/>
<path d="M2791.6,168.6 H2822.3 V174.4 L2810.5,186.6 V199 H2803.6 V186.6 L2791.6,174.4 Z" fill="#f8f8f8" stroke="#2b2b2b" stroke-width="1.8"/>
<path d="M2838.1,179 L2843.3,185.8 L2848.5,179" fill="none" stroke="#2b2b2b" stroke-width="2.6" stroke-linecap="round" stroke-linejoin="round"/>
<text x="2766" y="241.3" font-size="22.5" fill="#1f1f1f" text-anchor="start" font-weight="normal" font-family='"Liberation Sans", sans-serif' textLength="80" lengthAdjust="spacingAndGlyphs" stroke="#1f1f1f" stroke-width="0.3" >Ordenar</text>
<text x="2770.5" y="264.7" font-size="22.5" fill="#1f1f1f" text-anchor="start" font-weight="normal" font-family='"Liberation Sans", sans-serif' textLength="70.2" lengthAdjust="spacingAndGlyphs" stroke="#1f1f1f" stroke-width="0.3" >y filtrar</text>
<circle cx="2915.9" cy="174.9" r="20.2" fill="#f8f8f8" stroke="#2b2b2b" stroke-width="1.9"/>
<path d="M2900.8,190.2 L2879.6,211.2" stroke="#2b2b2b" stroke-width="1.9"/>
<path d="M2951.3,179 L2956.95,186 L2962.6,179" fill="none" stroke="#2b2b2b" stroke-width="2.6" stroke-linecap="round" stroke-linejoin="round"/>
<text x="2878" y="241.3" font-size="22.5" fill="#1f1f1f" text-anchor="start" font-weight="normal" font-family='"Liberation Sans", sans-serif' textLength="85" lengthAdjust="spacingAndGlyphs" stroke="#1f1f1f" stroke-width="0.3" >Buscar y</text>
<text x="2863.3" y="264.7" font-size="22.5" fill="#1f1f1f" text-anchor="start" font-weight="normal" font-family='"Liberation Sans", sans-serif' textLength="114.5" lengthAdjust="spacingAndGlyphs" stroke="#1f1f1f" stroke-width="0.3" >seleccionar</text>
<rect x="3077.2" y="154.2" width="55.6" height="55.3" fill="none" stroke="#d8401f" stroke-width="2"/>
<rect x="3081.5" y="158.5" width="21" height="21" fill="none" stroke="#d8401f" stroke-width="2"/>
<rect x="3107.6" y="158.5" width="21" height="21" fill="none" stroke="#d8401f" stroke-width="2"/>
<rect x="3081.5" y="184" width="21" height="21" fill="none" stroke="#d8401f" stroke-width="2"/>
<rect x="3107.6" y="184" width="21" height="21" fill="none" stroke="#d8401f" stroke-width="2"/>
<text x="3029.5" y="242" font-size="22.5" fill="#1f1f1f" text-anchor="start" font-weight="normal" font-family='"Liberation Sans", sans-serif' textLength="149.5" lengthAdjust="spacingAndGlyphs" stroke="#1f1f1f" stroke-width="0.3" >Complementos</text>
</svg></body></html>
